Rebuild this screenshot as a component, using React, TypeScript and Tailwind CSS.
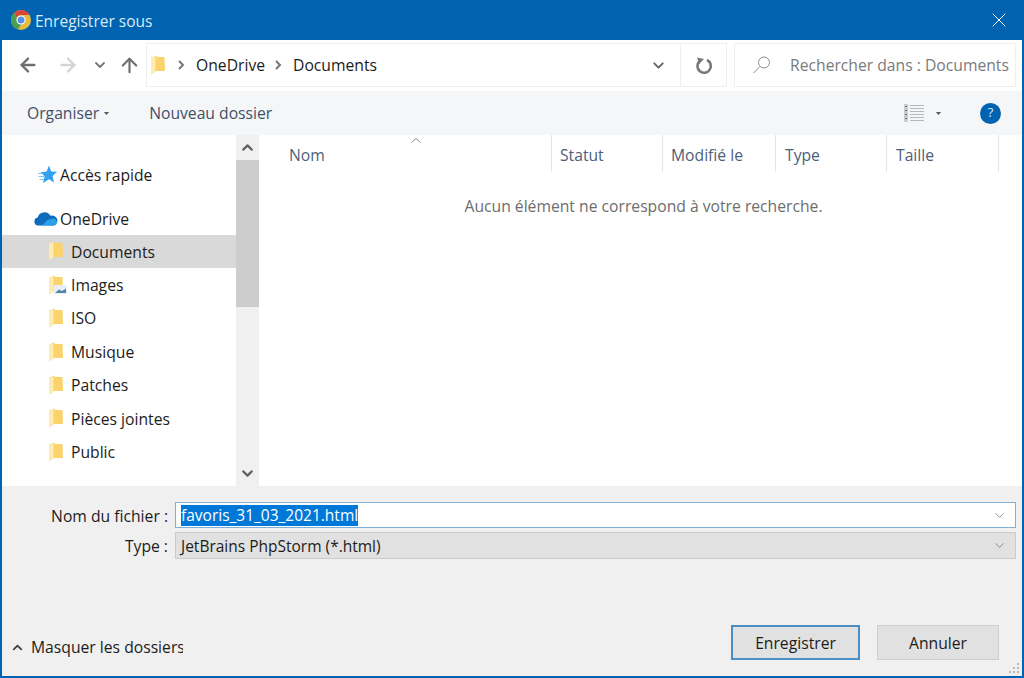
import { ArrowLeft, ArrowRight, ArrowUp, ChevronDown, ChevronUp, X } from 'lucide-react';

const FONT = { fontFamily: '"Open Sans", "Noto Sans", sans-serif' };

const FOLDERS = ['Documents', 'Images', 'ISO', 'Musique', 'Patches', 'Pièces jointes', 'Public'];

const COLUMNS = [
  { label: 'Nom', width: 'w-[291px]', pad: 'pl-[28px]' },
  { label: 'Statut', width: 'w-[111px]', pad: 'pl-[8px]' },
  { label: 'Modifié le', width: 'w-[113px]', pad: 'pl-[8px]' },
  { label: 'Type', width: 'w-[111px]', pad: 'pl-[9px]' },
  { label: 'Taille', width: 'w-[112px]', pad: 'pl-[9px]' },
];

// Explorer folder glyph, seen at an angle
const Folder = ({ picture = false }: { picture?: boolean }) => (
  <svg width="18" height="20" viewBox="0 0 18 20" className="shrink-0">
    <path d="M0 2.5 L5.5 0.5 L6 2 L13.5 2 L14 16 L5 16 L0 19.5 Z" fill="#fbd36c" />
    <path d="M0 2.5 L4.5 1 L4.5 16.5 L0 19.5 Z" fill="#fdebb0" />
    {picture && (
      <g>
        <rect x="5" y="10" width="13" height="9" fill="#e9eff5" />
        <path d="M6 18 L10 14.5 L13 16 L17 13.5 L17 18 Z" fill="#4f87a8" />
      </g>
    )}
  </svg>
);

const ChromeLogo = () => (
  <svg width="20" height="20" viewBox="0 0 20 20" className="shrink-0">
    <circle cx="10" cy="10" r="10" fill="#e8bb3c" />
    <path d="M10 0 A10 10 0 0 1 18.66 5 L10 5 A5 5 0 0 0 5.67 7.5 L2.9 3 A10 10 0 0 1 10 0 Z" fill="#d9473b" />
    <path d="M2.9 3 L5.67 7.5 L10 15 L6.5 19.4 A10 10 0 0 1 2.9 3 Z" fill="#4a9e55" />
    <circle cx="10" cy="10" r="4.6" fill="#fff" />
    <circle cx="10" cy="10" r="3.5" fill="#5b8ee6" />
  </svg>
);

const Star = () => (
  <svg width="20" height="20" viewBox="0 0 20 20" className="shrink-0">
    <path d="M12 0.5 L14.2 6.4 L20 6.8 L15.6 11 L17 17.5 L12 14.2 L6 18 L7.6 11.2 L3.5 7.2 L9.6 6.4 Z" fill="#34a0f0" />
    <path d="M1 8.5 H6 M1.5 11.5 H7 M2.5 14.5 H7" stroke="#7cc4f5" strokeWidth="1" />
  </svg>
);

const Cloud = () => (
  <svg width="24" height="15" viewBox="0 0 24 15" className="shrink-0">
    <path d="M4 14.5 A4 4 0 0 1 3.6 6.6 A7 7 0 0 1 16.4 4.8 A5 5 0 0 1 20 14.5 Z" fill="#0f6cbd" />
    <path d="M8 14.5 L13.5 9 L19.5 7.5 A3.8 3.8 0 0 1 22.8 12 A3.5 3.5 0 0 1 20 14.5 Z" fill="#2aa0ea" />
  </svg>
);

const Refresh = () => (
  <svg width="20" height="20" viewBox="0 0 20 20" className="shrink-0">
    <path d="M13 5 A6.7 6.7 0 1 1 5.5 6.2" fill="none" stroke="#777" strokeWidth="2.6" />
    <path d="M3 2.5 L10 4 L5.2 9 Z" fill="#777" />
  </svg>
);

const SearchGlass = () => (
  <svg width="20" height="20" viewBox="0 0 20 20" className="shrink-0">
    <circle cx="12" cy="7.5" r="5.5" fill="none" stroke="#8c8c8c" strokeWidth="1" />
    <path d="M8 11.5 L1.5 18" stroke="#8c8c8c" strokeWidth="1" />
  </svg>
);

const Crumb = () => (
  <svg width="14" height="14" viewBox="0 0 14 14" className="shrink-0">
    <path d="M5 3 L9 7 L5 11" fill="none" stroke="#777" strokeWidth="2" />
  </svg>
);

const ListViewIcon = () => (
  <svg width="20" height="18" viewBox="0 0 20 18" className="shrink-0">
    <rect x="0" y="0" width="4" height="18" fill="#c9ccd0" />
    <path d="M1 2.5 H3 M1 6.5 H3 M1 10.5 H3 M1 14.5 H3" stroke="#6f7378" strokeWidth="1" />
    <path d="M6 1.5 H20 M6 4.5 H20 M6 7.5 H20 M6 10.5 H20 M6 13.5 H20 M6 16.5 H20" stroke="#b5b8bc" strokeWidth="1" />
  </svg>
);

const TinyCaret = () => (
  <svg width="5" height="3" viewBox="0 0 5 3" className="shrink-0">
    <path d="M0 0 H5 L2.5 3 Z" fill="#555" />
  </svg>
);

const Grip = () => (
  <svg width="12" height="12" viewBox="0 0 12 12" className="absolute right-[2px] bottom-[2px]">
    <path d="M9 1h2v2H9z M5 5h2v2H5z M9 5h2v2H9z M1 9h2v2H1z M5 9h2v2H5z M9 9h2v2H9z" fill="#b9bbbd" />
  </svg>
);

function Sidebar() {
  return (
    <div className="w-[234px] shrink-0 pt-[23px] text-[15.7px] text-[#1c1c1c] bg-white">
      <div className="h-[33.4px] flex items-center pl-[35px] gap-[3px]">
        <Star />
        <span className="pt-[3px]">Accès rapide</span>
      </div>
      <div className="h-[33.4px] mt-[10px] flex items-center pl-[32px] gap-[2px]">
        <Cloud />
        <span className="pt-[3px]">OneDrive</span>
      </div>
      {FOLDERS.map((name, i) => (
        <div
          key={name}
          className={`h-[33.4px] flex items-center pl-[47px] gap-[4px] ${i === 0 ? 'bg-[#d9d9d9]' : ''}`}
        >
          <Folder picture={name === 'Images'} />
          <span className="pt-[2px]">{name}</span>
        </div>
      ))}
    </div>
  );
}

function Scrollbar() {
  return (
    <div className="w-[23px] shrink-0 bg-[#f0f0f0] flex flex-col items-center text-[#606060]">
      <div className="h-[25px] flex items-center justify-center">
        <ChevronUp size={17} strokeWidth={3} />
      </div>
      <div className="w-full h-[147px] bg-[#cdcdcd]" />
      <div className="flex-1" />
      <div className="h-[25px] flex items-center justify-center">
        <ChevronDown size={17} strokeWidth={3} />
      </div>
    </div>
  );
}

function FileList() {
  return (
    <div className="relative flex-1 ml-[2px] bg-white">
      <svg width="10" height="5" viewBox="0 0 10 5" className="absolute left-[150px] top-[3px]">
        <path d="M0.5 4.5 L5 0.5 L9.5 4.5" fill="none" stroke="#888" strokeWidth="1" />
      </svg>
      <div className="flex h-[37px] text-[15.7px] text-[#4c607a]">
        {COLUMNS.map(col => (
          <div key={col.label} className={`${col.width} ${col.pad} pt-[4px] flex items-center border-r border-[#e5e5e5]`}>
            {col.label}
          </div>
        ))}
      </div>
      <p className="mt-[23px] pl-[4px] text-center text-[15.7px] text-[#6d6d6d]">
        Aucun élément ne correspond à votre recherche.
      </p>
    </div>
  );
}

export default function App() {
  return (
    <div
      className="w-[1024px] h-[678px] flex flex-col overflow-hidden bg-white border-x-2 border-b-2 border-[#0063b1]"
      style={FONT}
    >
      {/* Title bar */}
      <div className="h-[40px] shrink-0 bg-[#0063b1] text-white flex items-center pl-[9px] pr-[11px] text-[15.5px]">
        <ChromeLogo />
        <span className="ml-[4px] pt-[3px] flex-1 text-[#dbe9f5]">Enregistrer sous</span>
        <X size={24} strokeWidth={1} />
      </div>

      {/* Navigation row */}
      <div className="h-[51px] shrink-0 flex items-start pt-[3px] pr-[6px] bg-white">
        <div className="w-[144px] h-[44px] shrink-0 flex items-center pl-[15px] text-[#6e6e6e]">
          <ArrowLeft size={22} strokeWidth={2.5} />
          <ArrowRight size={22} strokeWidth={2.5} className="ml-[18px] text-[#d4d4d4]" />
          <ChevronDown size={16} strokeWidth={2.75} className="ml-[13px] text-[#777]" />
          <ArrowUp size={23} strokeWidth={2.25} className="ml-[10px]" />
        </div>
        <div className="w-[581px] h-[44px] shrink-0 flex items-center border border-[#efefef] text-[15.7px] text-[#1c1c1c]">
          <div className="pl-[4px]"><Folder /></div>
          <div className="ml-[5px]"><Crumb /></div>
          <span className="ml-[8px] pt-[2px]">OneDrive</span>
          <div className="ml-[6px]"><Crumb /></div>
          <span className="ml-[8px] pt-[2px]">Documents</span>
          <div className="flex-1" />
          <ChevronDown size={17} strokeWidth={2.75} className="text-[#666] mr-[13px]" />
          <div className="w-[46px] h-full flex items-center justify-center border-l border-[#efefef]">
            <Refresh />
          </div>
        </div>
        <div className="ml-[7px] flex-1 h-[44px] flex items-center border border-[#efefef] text-[15.7px] text-[#7b7b7b] overflow-hidden whitespace-nowrap">
          <div className="ml-[17px]"><SearchGlass /></div>
          <span className="ml-[18px] pt-[2px]">Rechercher dans : Documents</span>
        </div>
      </div>

      {/* Toolbar */}
      <div className="h-[44px] shrink-0 bg-[#f5f6f7] flex items-center pl-[25px] pr-[21px] text-[15.7px] text-[#3f5068]">
        <span className="pt-[2px]">Organiser</span>
        <div className="ml-[5px]"><TinyCaret /></div>
        <span className="ml-[40px] pt-[2px] flex-1">Nouveau dossier</span>
        <ListViewIcon />
        <div className="ml-[12px]"><TinyCaret /></div>
        <div className="ml-[39px] w-[21px] h-[21px] rounded-full bg-[#0063b1] text-[#d8e8f5] text-[13px] flex items-center justify-center">?</div>
      </div>

      {/* Content */}
      <div className="h-[351px] shrink-0 flex bg-white">
        <Sidebar />
        <Scrollbar />
        <FileList />
      </div>

      {/* Bottom form */}
      <div className="relative flex-1 bg-[#f0f0f0] text-[15.7px] text-[#1c1c1c] pt-[16px]">
        <div className="flex items-center h-[26px]">
          <span className="w-[166px] pt-[3px] text-right shrink-0">Nom du fichier :</span>
          <div className="ml-[7px] w-[841px] h-[26px] bg-white border border-[#7fb0d6] flex items-center pl-[5px] pr-[8px] text-[15.5px]">
            <span className="bg-[#0078d7] text-white leading-[21px] h-[21px] flex-none">favoris_31_03_2021.html</span>
            <div className="flex-1" />
            <ChevronDown size={15} strokeWidth={1} className="text-[#555]" />
          </div>
        </div>
        <div className="flex items-center h-[27px] mt-[4px]">
          <span className="w-[166px] pt-[3px] text-right shrink-0">Type :</span>
          <div className="ml-[7px] w-[841px] h-[27px] bg-[#e1e1e1] border border-[#cacaca] flex items-center pl-[5px] pr-[8px] text-[15.5px]">
            <span className="flex-1 pt-[2px]">JetBrains PhpStorm (*.html)</span>
            <ChevronDown size={15} strokeWidth={1} className="text-[#555]" />
          </div>
        </div>
        <div className="flex items-start mt-[66px]">
          <div className="w-[181px] shrink-0 flex items-center pl-[8px] pt-[11px] overflow-hidden whitespace-nowrap">
            <ChevronUp size={15} strokeWidth={3} className="text-[#444] shrink-0" />
            <span className="ml-[6px]">Masquer les dossiers</span>
          </div>
          <button className="ml-[548px] w-[129px] h-[35px] pt-[2px] bg-[#e1e1e1] border-2 border-[#4a90c6]">Enregistrer</button>
          <button className="ml-[17px] w-[122px] h-[35px] pt-[2px] bg-[#e1e1e1] border border-[#cfcfcf]">Annuler</button>
        </div>
        <Grip />
      </div>
    </div>
  );
}
